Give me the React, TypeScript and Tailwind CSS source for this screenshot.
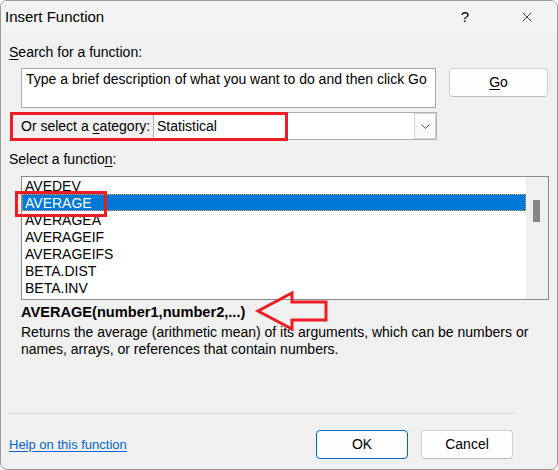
import { X } from 'lucide-react'

const functions = ['AVEDEV', 'AVERAGE', 'AVERAGEA', 'AVERAGEIF', 'AVERAGEIFS', 'BETA.DIST', 'BETA.INV']

export default function App() {
  return (
    <div className="w-[558px] h-[470px] bg-white font-['Liberation_Sans',Arial,sans-serif] text-[14px] text-black">
      <div className="relative w-[558px] h-[470px] border border-[#9a9a9a] rounded-[7px] bg-[#f0f0f0] overflow-hidden flex flex-col">
        {/* title bar */}
        <div className="h-[31px] flex items-center bg-[#f3f3f3]">
          <span className="pl-[4px] text-[15px] leading-[31px]">Insert Function</span>
          <span className="ml-auto text-[15px] leading-[31px] mr-[50px]">?</span>
          <X size={16} strokeWidth={1.25} className="mr-[22px] text-[#1a1a1a]" />
        </div>

        <div className="pl-[8px] mt-[12px] leading-[17px]">
          <u className="underline-offset-2">S</u>earch for a function:
        </div>

        <div className="flex items-start mt-[7px]">
          <div className="ml-[20px] w-[415px] h-[40px] border border-[#a8a8a8] bg-white px-[4px] pt-[2px] leading-[17px]">
            Type a brief description of what you want to do and then click Go
          </div>
          <button className="ml-[13px] w-[99px] h-[29px] rounded-[4px] border border-[#d0d0d0] border-b-[#bdbdbd] bg-[#fdfdfd] leading-[17px]">
            <u className="underline-offset-2">G</u>o
          </button>
        </div>

        {/* category row */}
        <div className="relative flex mt-[4px] h-[28px]">
          <div className="w-[152px] pl-[20px] flex items-center">
            <span>
              Or select a <u className="underline-offset-2">c</u>ategory:
            </span>
          </div>
          <div className="w-[284px] h-[28px] border border-[#b0b0b0] bg-white flex items-center">
            <span className="pl-[3px]">Statistical</span>
            <div className="ml-auto w-[22px] h-full border border-[#d4d4d4] bg-[#fafafa] flex items-center justify-center">
              <svg width="9" height="5" viewBox="0 0 9 5" fill="none">
                <path d="M0.5 0.5 L4.5 4.5 L8.5 0.5" stroke="#555" strokeWidth="1" />
              </svg>
            </div>
          </div>
          <div className="absolute left-[9px] top-0 w-[278px] h-[29px] border-[3px] border-[#ed1c24]" />
        </div>

        <div className="pl-[8px] mt-[11px] leading-[17px]">
          Select a functio<u className="underline-offset-2">n</u>:
        </div>

        {/* function list */}
        <div className="relative ml-[20px] mt-[8px] w-[528px] h-[124px] border border-[#868a91] flex">
          <div className="flex-1 bg-white">
            <div className="mt-[4px] h-[118px] overflow-hidden">
              {functions.map((name, index) => (
                <div
                  key={name}
                  className={`${index === 0 ? '-mt-[4px]' : ''} ${
                    name === 'AVERAGE'
                      ? 'bg-[#0078d7] text-white outline-1 outline-dotted outline-[#e8a040] -outline-offset-1'
                      : ''
                  } h-[17px] pl-[3px] pt-[1px] leading-[17px]`}
                >
                  {name}
                </div>
              ))}
            </div>
          </div>
          <div className="w-[22px] bg-[#f0f0f0]">
            <div className="ml-[7px] mt-[23px] w-[7px] h-[22px] bg-[#868686]" />
          </div>
          <div className="absolute left-[-7px] top-[14px] w-[92px] h-[26px] border-[3px] border-[#ed1c24]" />
        </div>

        <div className="pl-[20px] mt-[4px] leading-[17px] font-bold text-[14.6px]">AVERAGE(number1,number2,...)</div>
        <div className="pl-[20px] mt-[3px] leading-[17px] whitespace-nowrap">
          Returns the average (arithmetic mean) of its arguments, which can be numbers or
          <br />
          names, arrays, or references that contain numbers.
        </div>

        <svg className="absolute left-[253px] top-[288px]" width="76" height="44" viewBox="0 0 76 44" fill="none">
          <polygon
            points="4,22 38,4 38,13 72,13 72,31 38,31 38,40"
            stroke="#ed1c24"
            strokeWidth="3"
            strokeLinejoin="miter"
          />
        </svg>

        {/* footer */}
        <div className="mt-auto ml-[7px] w-[507px] border-t border-[#d9d9d9] pt-[16px] pb-[10px] flex items-center">
          <a className="pl-[1px] text-[13px] text-[#0066cc] underline underline-offset-2">Help on this function</a>
          <button className="ml-auto w-[92px] h-[29px] rounded-[4px] border border-[#0067c0] bg-[#fdfdfd] leading-[17px]">
            OK
          </button>
          <button className="ml-[13px] mr-[2px] w-[92px] h-[29px] rounded-[4px] border border-[#d0d0d0] border-b-[#bdbdbd] bg-[#fdfdfd] leading-[17px]">
            Cancel
          </button>
        </div>
      </div>
    </div>
  )
}
